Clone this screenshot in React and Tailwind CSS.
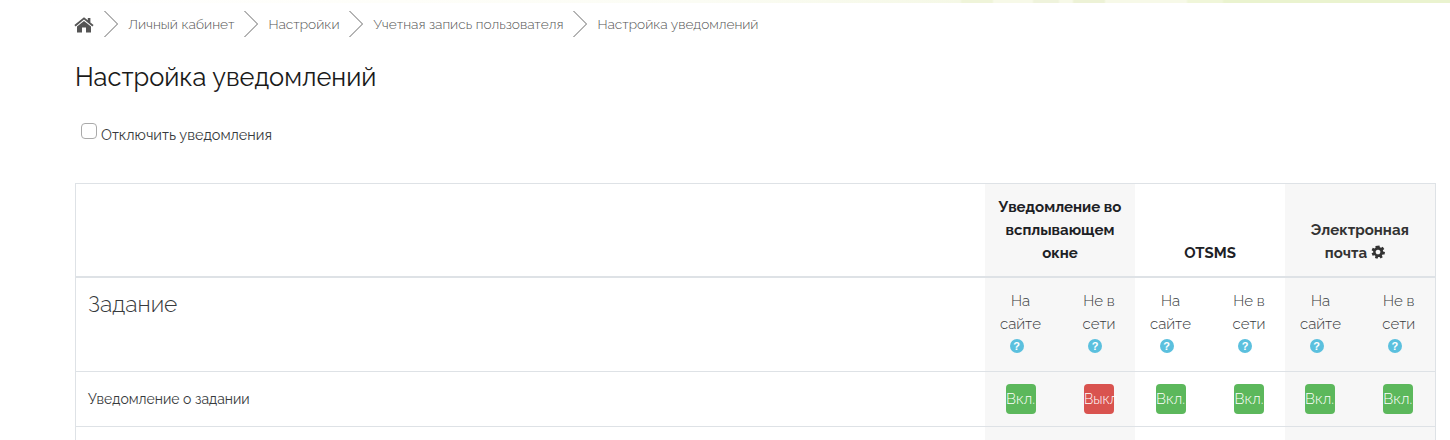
import React from "react";

function Chevron() {
  return (
    <svg width="15" height="28" viewBox="0 0 15 28" className="shrink-0 ml-[10px] mr-[9px]" fill="none">
      <path d="M0.5 1 L13.5 14 L0.5 27" stroke="#6b6b6b" strokeWidth="1" />
    </svg>
  );
}

function Home() {
  return (
    <svg width="20" height="17" viewBox="0 0 20 17" className="shrink-0">
      <path d="M10 1.2 L0.4 9 L1.6 10.4 L10 3.6 L18.4 10.4 L19.6 9 L16.4 6.4 V2 H13.8 V4.3 Z" fill="#555" />
      <path d="M10 4.9 L3 10.6 V16.4 H8 V11.6 H12 V16.4 H17 V10.6 Z" fill="#555" />
    </svg>
  );
}

function Help() {
  return (
    <span className="inline-flex w-[14px] h-[14px] rounded-full bg-[#5bc0de] items-center justify-center text-white text-[11px] font-bold leading-none font-['Liberation_Sans',sans-serif]">?</span>
  );
}

function Gear() {
  return (
    <svg width="14" height="14" viewBox="0 0 24 24" className="inline-block align-[-1px] mr-[10px]" fill="#333">
      <path fillRule="evenodd" d="M14.5 0.8 L15.2 4 L17.3 4.9 L20.1 3.2 L22.8 6.7 L20.3 8.9 L20.8 11 L24 12 L23.2 16.4 L19.9 16.1 L18.6 18 L20.1 20.9 L16.4 23.2 L14.6 20.4 L12.4 20.6 L11 23.6 L6.8 22.2 L7.6 19 L6 17.5 L2.8 18.4 L1 14.3 L3.9 12.7 L3.8 10.5 L1 8.8 L3 4.8 L6 6.1 L7.8 4.8 L7.6 1.5 Z M12 8 A4 4 0 1 0 12.01 8 Z" />
    </svg>
  );
}

function Toggle({ on }) {
  return (
    <span className={`inline-flex w-[30px] h-[30px] rounded-[4px] items-center whitespace-nowrap text-white font-light ${on ? "bg-[#5cb85c] justify-center text-[15px]" : "bg-[#d9534f] justify-start text-[14px]"}`}>
      <span>{on ? "Вкл." : "Выкл"}</span>
    </span>
  );
}

const cols = ["bg-[#f7f7f7]", "bg-[#f7f7f7]", "", "", "bg-[#f7f7f7]", "bg-[#f7f7f7]"];
const states = [true, false, true, true, true, true];
const togglePad = ["pr-[4px]", "pl-[3px]", "pr-[4px]", "pl-[3px]", "pr-[6px]", "pl-[1px]"];

export default function App() {
  return (
    <div className="w-[1450px] h-[440px] overflow-hidden bg-white font-['Raleway','Lato','Open_Sans',sans-serif] text-[#373a3c]">
      <div className="h-[3px] bg-[linear-gradient(90deg,#ffffff_0px,#fefef9_400px,#fbfcf4_700px,#f5f8e6_960px,#eff4d9_962px,#eff4d9_992px,#f7f9e8_994px,#f7f9e8_1032px,#eff3dc_1034px,#eff3dc_1058px,#f7f9e8_1060px,#f7f9e8_1072px,#edf2d6_1074px,#edf2d6_1104px,#f7f9e8_1106px,#f7f9e8_1186px,#f0f6d9_1188px,#f0f6d9_1222px,#eaf3cf_1224px,#eaf3cf_1450px)]" />
      <nav className="flex items-center pl-[74px] h-[42px] text-[13.7px] text-[#555] font-light">
        <Home />
        <Chevron />
        <span>Личный кабинет</span>
        <Chevron />
        <span>Настройки</span>
        <Chevron />
        <span>Учетная запись пользователя</span>
        <Chevron />
        <span>Настройка уведомлений</span>
      </nav>
      <main className="pl-[75px] w-[1436px]">
        <h1 className="text-[25.4px] leading-[31px] font-normal text-[#1a1a1a] mt-[17px]">Настройка уведомлений</h1>
        <label className="flex items-start mt-[31px] pl-[6px] text-[14.5px] h-[20px]">
          <span className="w-[16px] h-[16px] border border-[#aaa] rounded-[4px] bg-white mr-[4px] mt-[-1px]" />
          <span className="leading-[20px] mt-[1px]">Отключить уведомления</span>
        </label>
        <table className="mt-[39px] w-[1360.5px] table-fixed border-collapse border border-[#dee2e6]">
          <colgroup>
            <col />
            {cols.map((_, i) => <col key={i} className="w-[75px]" />)}
          </colgroup>
          <thead>
            <tr className="h-[93px] border-b-2 border-[#dee2e6]">
              <th />
              <th colSpan={2} className="bg-[#f7f7f7] align-bottom px-[12px] pb-[11px] text-[15px] leading-[23px] font-bold text-[#1d2125]">Уведомление во всплывающем окне</th>
              <th colSpan={2} className="align-bottom px-[12px] pb-[11px] text-[15px] leading-[23px] font-bold text-[#1d2125]">OTSMS</th>
              <th colSpan={2} className="bg-[#f7f7f7] align-bottom px-[12px] pb-[11px] text-[15px] leading-[23px] font-bold text-[#333]">Электронная почта <Gear /></th>
            </tr>
          </thead>
          <tbody>
            <tr className="h-[95px] border-b border-[#dee2e6]">
              <td className="align-top pl-[12px] pt-[12px] text-[22.8px] leading-[29px] font-light">Задание</td>
              {cols.map((c, i) => (
                <td key={i} className={`${c} align-top text-center pt-[12px] text-[15px] leading-[23px] font-light ${i % 2 === 0 ? "pl-[10px] pr-[14px]" : "pl-[13px] pr-[10px]"}`}>
                  {i % 2 === 0 ? "На сайте" : "Не в сети"}
                  <div className="mt-[2px] h-[16px] leading-none pr-[8px]"><Help /></div>
                </td>
              ))}
            </tr>
            <tr className="h-[55px] border-b border-[#dee2e6]">
              <td className="pl-[12px] text-[14px] font-normal">Уведомление о задании</td>
              {cols.map((c, i) => (
                <td key={i} className={`${c} align-middle ${togglePad[i]}`}>
                  <div className="flex justify-center"><Toggle on={states[i]} /></div>
                </td>
              ))}
            </tr>
            <tr className="h-[40px]">
              <td />
              {cols.map((c, i) => <td key={i} className={c} />)}
            </tr>
          </tbody>
        </table>
      </main>
    </div>
  );
}
